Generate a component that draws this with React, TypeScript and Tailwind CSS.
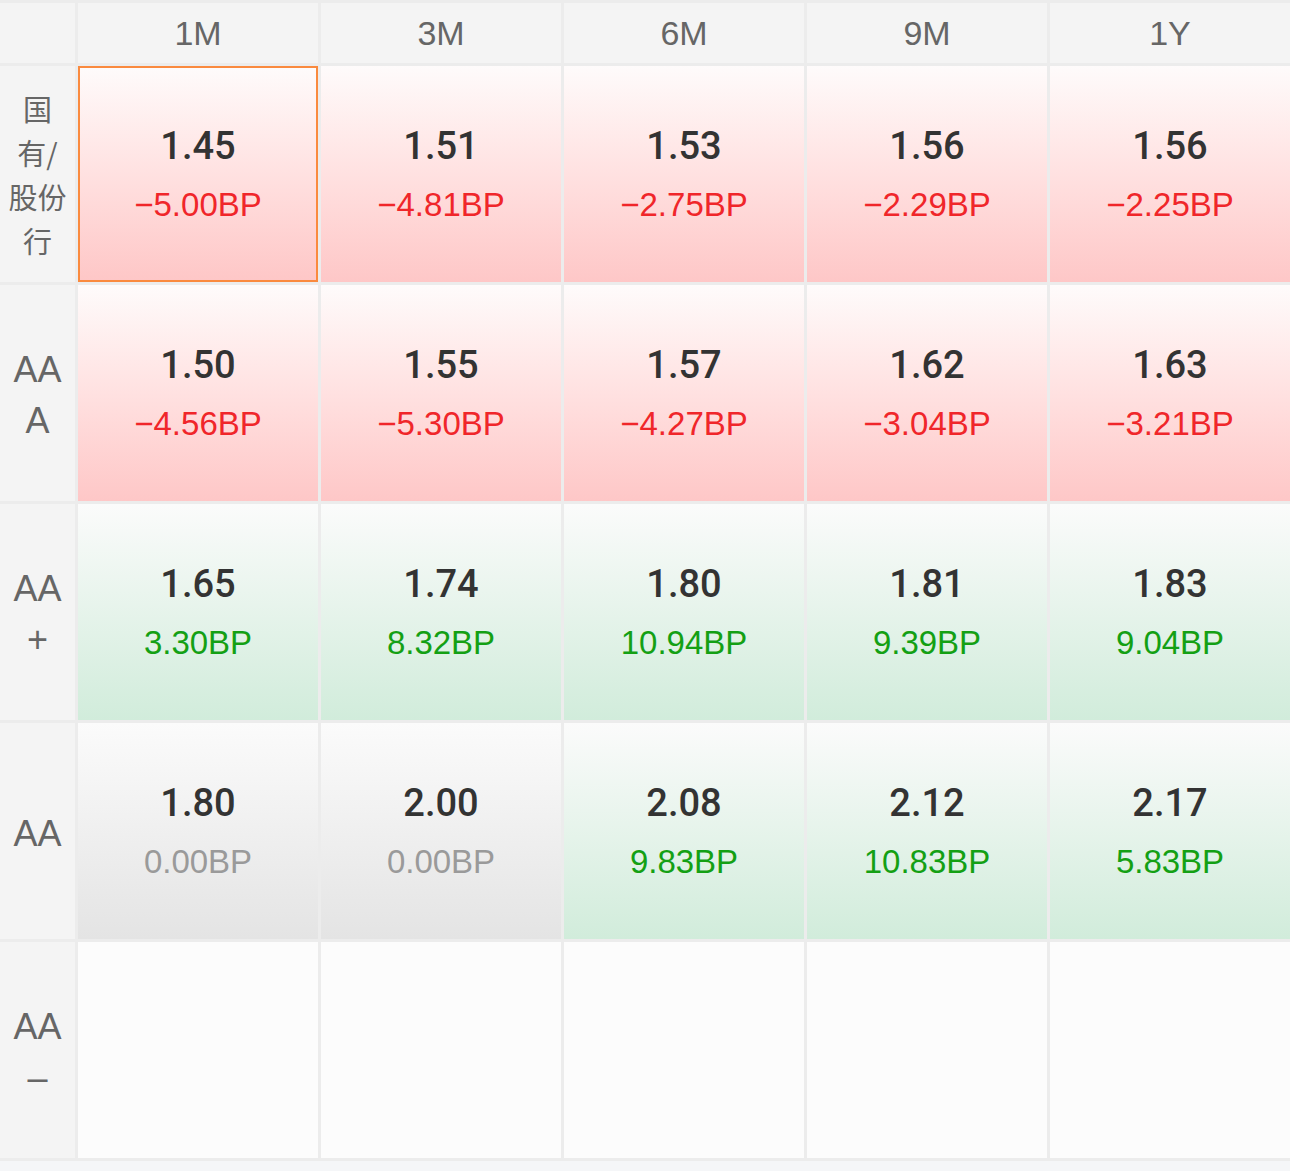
import React from "react";

type Tone = "red" | "green" | "gray" | "empty";
type Cell = { v?: string; bp?: string; tone: Tone; active?: boolean };

const heads = ["1M", "3M", "6M", "9M", "1Y"];

const rows: { label: React.ReactNode; cjk?: boolean; cells: Cell[] }[] = [
  {
    label: (
      <>
        国<br />有/<br />股份<br />行
      </>
    ),
    cjk: true,
    cells: [
      { v: "1.45", bp: "−5.00BP", tone: "red", active: true },
      { v: "1.51", bp: "−4.81BP", tone: "red" },
      { v: "1.53", bp: "−2.75BP", tone: "red" },
      { v: "1.56", bp: "−2.29BP", tone: "red" },
      { v: "1.56", bp: "−2.25BP", tone: "red" },
    ],
  },
  {
    label: (
      <>
        AA<br />A
      </>
    ),
    cells: [
      { v: "1.50", bp: "−4.56BP", tone: "red" },
      { v: "1.55", bp: "−5.30BP", tone: "red" },
      { v: "1.57", bp: "−4.27BP", tone: "red" },
      { v: "1.62", bp: "−3.04BP", tone: "red" },
      { v: "1.63", bp: "−3.21BP", tone: "red" },
    ],
  },
  {
    label: (
      <>
        AA<br />+
      </>
    ),
    cells: [
      { v: "1.65", bp: "3.30BP", tone: "green" },
      { v: "1.74", bp: "8.32BP", tone: "green" },
      { v: "1.80", bp: "10.94BP", tone: "green" },
      { v: "1.81", bp: "9.39BP", tone: "green" },
      { v: "1.83", bp: "9.04BP", tone: "green" },
    ],
  },
  {
    label: <>AA</>,
    cells: [
      { v: "1.80", bp: "0.00BP", tone: "gray" },
      { v: "2.00", bp: "0.00BP", tone: "gray" },
      { v: "2.08", bp: "9.83BP", tone: "green" },
      { v: "2.12", bp: "10.83BP", tone: "green" },
      { v: "2.17", bp: "5.83BP", tone: "green" },
    ],
  },
  {
    label: (
      <>
        AA<br />–
      </>
    ),
    cells: [
      { tone: "empty" },
      { tone: "empty" },
      { tone: "empty" },
      { tone: "empty" },
      { tone: "empty" },
    ],
  },
];

function DataCell({ c }: { c: Cell }) {
  const bg =
    c.tone === "red"
      ? "bg-gradient-to-b from-[#fefbfb] to-[#fec7c7]"
      : c.tone === "green"
      ? "bg-gradient-to-b from-[#fbfbfb] to-[#d1ecdb]"
      : c.tone === "gray"
      ? "bg-gradient-to-b from-[#fbfbfb] to-[#e4e4e4]"
      : "bg-[#fcfcfc]";
  const bpColor =
    c.tone === "red"
      ? "text-[#f0262a]"
      : c.tone === "green"
      ? "text-[#14a014]"
      : "text-[#9a9a9a]";
  return (
    <div
      className={`${bg} flex flex-col items-center justify-center gap-[17px] ${
        c.active ? "border-2 border-[#fa8a3e]" : ""
      }`}
    >
      {c.v && (
        <div className="text-[38px] leading-[44px] font-medium text-[#333333] font-['Roboto',sans-serif]">
          {c.v}
        </div>
      )}
      {c.bp && (
        <div className={`text-[33px] leading-[40px] ${bpColor} font-['Liberation_Sans',Arial,sans-serif]`}>
          {c.bp}
        </div>
      )}
    </div>
  );
}

export default function App() {
  return (
    <div className="w-[1290px] h-[1171px] bg-[#f5f6f8] font-['Liberation_Sans',Arial,sans-serif]">
      <div className="bg-[#ececec] pt-[3px] pb-[3px]">
        <div className="grid grid-cols-[75px_repeat(5,240px)] grid-rows-[60px_repeat(5,216px)] gap-[3px]">
          <div className="bg-[#f4f4f4]" />
          {heads.map((h) => (
            <div
              key={h}
              className="bg-[#f4f4f4] flex items-center justify-center text-[34px] text-[#666666]"
            >
              {h}
            </div>
          ))}
          {rows.map((r, i) => (
            <React.Fragment key={i}>
              <div
                className={`bg-[#f4f4f4] flex items-center justify-center text-center text-[#666666] ${
                  r.cjk
                    ? "text-[29px] leading-[44px] font-['Noto_Sans_CJK_SC',sans-serif]"
                    : "text-[36px] leading-[51px]"
                }`}
              >
                <div className={r.cjk ? "" : "pt-[4px]"}>{r.label}</div>
              </div>
              {r.cells.map((c, j) => (
                <DataCell key={j} c={c} />
              ))}
            </React.Fragment>
          ))}
        </div>
      </div>
    </div>
  );
}
